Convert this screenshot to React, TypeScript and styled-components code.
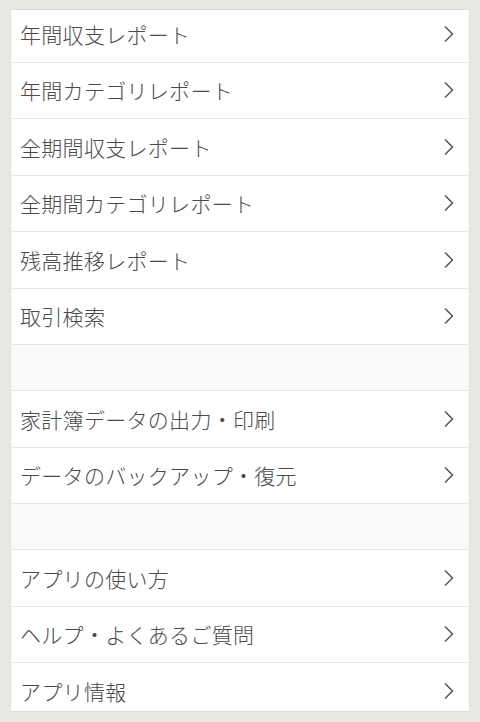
import React from "react";
import styled, { createGlobalStyle } from "styled-components";

const GlobalStyle = createGlobalStyle`
  html, body {
    margin: 0;
    padding: 0;
    background: #e9e8e3;
    font-family: "Noto Sans CJK JP", "Noto Sans", sans-serif;
  }
`;

const Page = styled.div`
  width: 480px;
  height: 722px;
  padding: 10px 11px 11px 11px;
  box-sizing: border-box;
  background: #e9e8e3;
`;

const Frame = styled.div`
  height: 100%;
  overflow: hidden;
  background: #fff;
  box-shadow: 0 0 0 1px #deddd8;
`;

const List = styled.ul`
  list-style: none;
  margin: -4px 0 0 0;
  padding: 0;
`;

const Row = styled.li`
  display: flex;
  align-items: center;
  justify-content: space-between;
  height: 56.5px;
  padding: 0 14px 0 9px;
  box-sizing: border-box;
  border-bottom: 1px solid #e6e6e6;
  font-size: 21px;
  font-weight: 300;
  color: #4a4a4a;
  letter-spacing: 0.3px;
  cursor: pointer;
`;

const Spacer = styled.li<{ $h: number }>`
  height: ${(p) => p.$h}px;
  background: #fafafa;
  border-bottom: 1px solid #e6e6e6;
  box-sizing: border-box;
`;

const Chevron = () => (
  <svg width="12" height="18" viewBox="0 0 12 18">
    <path d="M2 1.5 L9.5 9 L2 16.5" fill="none" stroke="#555" strokeWidth="1.5" />
  </svg>
);

type Item = { label: string } | { gap: number };

const items: Item[] = [
  { label: "年間収支レポート" },
  { label: "年間カテゴリレポート" },
  { label: "全期間収支レポート" },
  { label: "全期間カテゴリレポート" },
  { label: "残高推移レポート" },
  { label: "取引検索" },
  { gap: 46 },
  { label: "家計簿データの出力・印刷" },
  { label: "データのバックアップ・復元" },
  { gap: 46 },
  { label: "アプリの使い方" },
  { label: "ヘルプ・よくあるご質問" },
  { label: "アプリ情報" },
];

const App = () => {
  return (
    <>
      <GlobalStyle />
      <Page>
        <Frame>
          <List>
            {items.map((item, i) =>
              "gap" in item ? (
                <Spacer key={i} $h={item.gap} />
              ) : (
                <Row key={i}>
                  <span>{item.label}</span>
                  <Chevron />
                </Row>
              )
            )}
          </List>
        </Frame>
      </Page>
    </>
  );
};

export default App;
